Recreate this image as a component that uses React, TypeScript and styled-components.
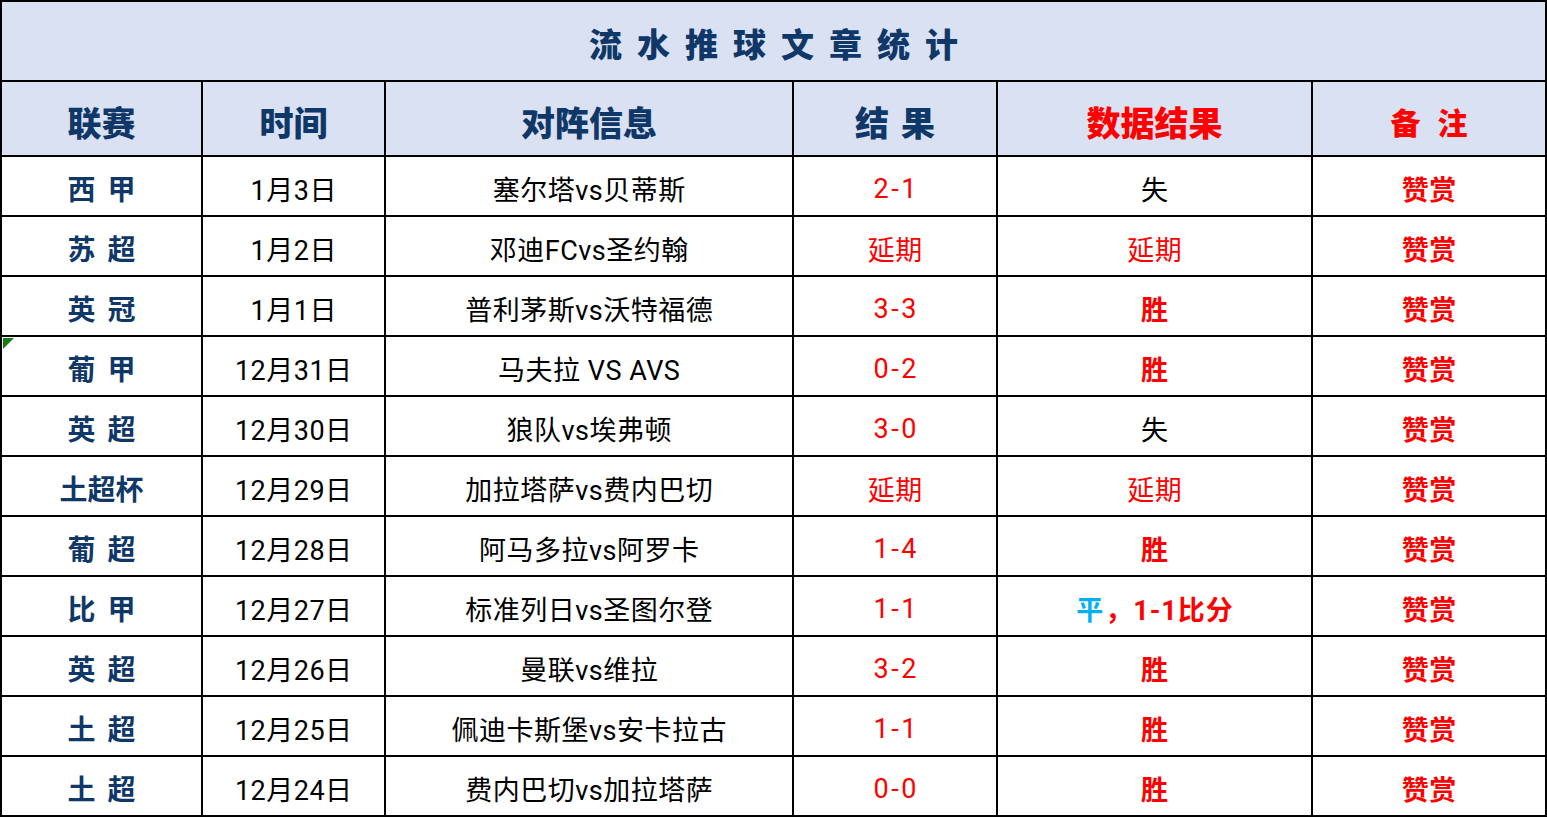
import React from "react";
import styled, { createGlobalStyle } from "styled-components";

const Global = createGlobalStyle`
  html, body { margin: 0; padding: 0; background: #ffffff; }
  body { font-family: Roboto, "Noto Sans CJK SC", sans-serif; }
`;

const NAVY = "#0f3768";
const RED = "#ff0000";
const SKY = "#00b0f0";
const HEAD_BG = "#d9e1f2";

const Sheet = styled.div`
  width: 1547px;
  box-sizing: border-box;
  display: grid;
  grid-template-columns: 199px 181px 406px 202px 313px 232px;
  grid-template-rows: 78px 73px repeat(11, 58px);
  gap: 2px;
  padding: 2px;
  background: #000;
`;

const Title = styled.div`
  grid-column: 1 / -1;
  background: ${HEAD_BG};
  display: flex;
  align-items: center;
  justify-content: center;
  padding-top: 3px;
  box-sizing: border-box;
  color: ${NAVY};
  font-family: "Noto Sans CJK SC", sans-serif;
  font-weight: 900;
  font-size: 33px;
  letter-spacing: 15px;
  text-indent: 15px;
`;

const HeadCell = styled.div<{ $red?: boolean; $spacing?: number; $size?: number }>`
  background: ${HEAD_BG};
  display: flex;
  align-items: center;
  justify-content: center;
  padding-top: 5px;
  box-sizing: border-box;
  color: ${(p) => (p.$red ? RED : NAVY)};
  font-family: "Noto Sans CJK SC", sans-serif;
  font-weight: 900;
  font-size: ${(p) => p.$size ?? 34}px;
  letter-spacing: ${(p) => p.$spacing ?? 0}px;
  text-indent: ${(p) => p.$spacing ?? 0}px;
  white-space: pre;
`;

const Cell = styled.div<{
  $color?: string;
  $bold?: boolean;
  $size?: number;
  $wordGap?: number;
  $track?: number;
  $drop?: number;
}>`
  position: relative;
  background: #fff;
  display: flex;
  align-items: center;
  justify-content: center;
  padding-top: ${(p) => 4 + (p.$drop ?? 0)}px;
  box-sizing: border-box;
  color: ${(p) => p.$color ?? "#000"};
  font-family: Roboto, "Noto Sans CJK SC", sans-serif;
  font-weight: ${(p) => (p.$bold ? 700 : 400)};
  font-size: ${(p) => p.$size ?? 27}px;
  word-spacing: ${(p) => p.$wordGap ?? 0}px;
  letter-spacing: ${(p) => p.$track ?? 0.5}px;
  text-indent: ${(p) => p.$track ?? 0.5}px;
  white-space: pre;
`;

const Tint = styled.span<{ $color: string }>`
  color: ${(p) => p.$color};
`;

const CommentMark = styled.span`
  position: absolute;
  left: 1px;
  top: 1px;
  width: 0;
  height: 0;
  border-top: 11px solid #1a7a1a;
  border-right: 11px solid transparent;
`;

type Row = {
  league: string;
  date: string;
  match: string;
  score: string;
  data: "失" | "胜" | "延期" | "平";
  mark?: boolean;
};

const rows: Row[] = [
  { league: "西 甲", date: "1月3日", match: "塞尔塔vs贝蒂斯", score: "2-1", data: "失" },
  { league: "苏 超", date: "1月2日", match: "邓迪FCvs圣约翰", score: "延期", data: "延期" },
  { league: "英 冠", date: "1月1日", match: "普利茅斯vs沃特福德", score: "3-3", data: "胜" },
  { league: "葡 甲", date: "12月31日", match: "马夫拉 VS AVS", score: "0-2", data: "胜", mark: true },
  { league: "英 超", date: "12月30日", match: "狼队vs埃弗顿", score: "3-0", data: "失" },
  { league: "土超杯", date: "12月29日", match: "加拉塔萨vs费内巴切", score: "延期", data: "延期" },
  { league: "葡 超", date: "12月28日", match: "阿马多拉vs阿罗卡", score: "1-4", data: "胜" },
  { league: "比 甲", date: "12月27日", match: "标准列日vs圣图尔登", score: "1-1", data: "平" },
  { league: "英 超", date: "12月26日", match: "曼联vs维拉", score: "3-2", data: "胜" },
  { league: "土 超", date: "12月25日", match: "佩迪卡斯堡vs安卡拉古", score: "1-1", data: "胜" },
  { league: "土 超", date: "12月24日", match: "费内巴切vs加拉塔萨", score: "0-0", data: "胜" },
];

function DataCell({ data }: { data: Row["data"] }) {
  if (data === "失") return <Cell>失</Cell>;
  if (data === "延期") return <Cell $color={RED}>延期</Cell>;
  if (data === "胜")
    return (
      <Cell $color={RED} $bold>
        胜
      </Cell>
    );
  return (
    <Cell $color={RED} $bold $track={1}>
      <Tint $color={SKY}>平</Tint>，1-1比分
    </Cell>
  );
}

export default function App() {
  return (
    <>
      <Global />
      <Sheet>
        <Title>流水推球文章统计</Title>
        <HeadCell>联赛</HeadCell>
        <HeadCell>时间</HeadCell>
        <HeadCell>对阵信息</HeadCell>
        <HeadCell $spacing={12}>结果</HeadCell>
        <HeadCell $red>数据结果</HeadCell>
        <HeadCell $red $size={30} $spacing={17}>
          备注
        </HeadCell>
        {rows.map((r, i) => {
          const numeric = r.score.length === 3;
          return (
            <React.Fragment key={i}>
              <Cell $color={NAVY} $bold $size={28} $wordGap={5} $track={0}>
                {r.mark && <CommentMark />}
                {r.league}
              </Cell>
              <Cell>{r.date}</Cell>
              <Cell>{r.match}</Cell>
              <Cell $color={RED} $track={numeric ? 2.5 : 0.5} $drop={numeric ? 2 : 0}>
                {r.score}
              </Cell>
              <DataCell data={r.data} />
              <Cell $color={RED} $bold>
                赞赏
              </Cell>
            </React.Fragment>
          );
        })}
      </Sheet>
    </>
  );
}
